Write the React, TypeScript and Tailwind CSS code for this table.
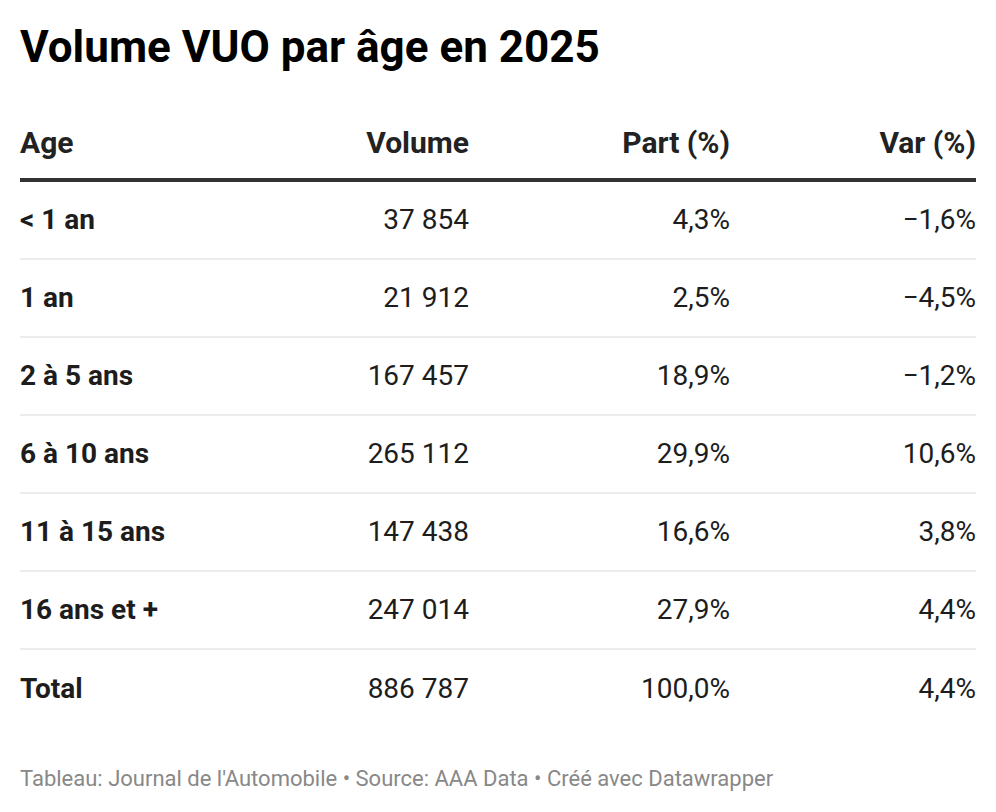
const rows: [string, string, string, string][] = [
  ["< 1 an", "37 854", "4,3%", "−1,6%"],
  ["1 an", "21 912", "2,5%", "−4,5%"],
  ["2 à 5 ans", "167 457", "18,9%", "−1,2%"],
  ["6 à 10 ans", "265 112", "29,9%", "10,6%"],
  ["11 à 15 ans", "147 438", "16,6%", "3,8%"],
  ["16 ans et +", "247 014", "27,9%", "4,4%"],
  ["Total", "886 787", "100,0%", "4,4%"],
];

export default function App() {
  return (
    <div className="w-[996px] h-[812px] bg-white px-5 font-['Roboto',sans-serif] text-[#1d1d1d]">
      <h1 className="pt-[21px] text-[44px] leading-[52px] font-bold text-black">
        Volume VUO par âge en 2025
      </h1>
      <div className="mt-[52px] w-[956px]">
        <div className="grid grid-cols-[200px_249px_261px_246px] border-b-[4px] border-[#333] pb-[17px] text-[30px] leading-[36px] font-bold text-[#222]">
          <div>Age</div>
          <div className="text-right">Volume</div>
          <div className="text-right">Part (%)</div>
          <div className="text-right">Var (%)</div>
        </div>
        {rows.map((r, i) => (
          <div
            key={r[0]}
            className={`grid grid-cols-[200px_249px_261px_246px] h-[78px] items-center text-[28px] leading-[34px] ${
              i < rows.length - 1 ? "border-b-2 border-[#ececec]" : ""
            }`}
          >
            <div className="font-bold">{r[0]}</div>
            <div className="text-right">{r[1]}</div>
            <div className="text-right">{r[2]}</div>
            <div className="text-right">{r[3]}</div>
          </div>
        ))}
      </div>
      <p className="mt-[38px] text-[22px] leading-[26px] text-[#888]">
        Tableau: Journal de l'Automobile • Source: AAA Data • Créé avec Datawrapper
      </p>
    </div>
  );
}
